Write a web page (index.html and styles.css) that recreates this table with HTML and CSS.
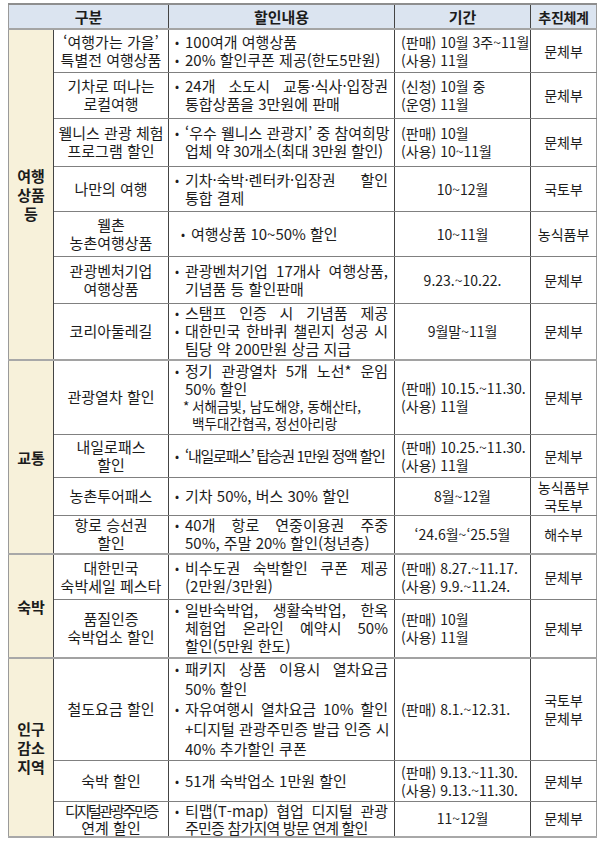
FILE: index.html
```html
<!DOCTYPE html>
<html lang="ko">
<head>
<meta charset="utf-8">
<title>할인 지원 내용</title>
<link rel="stylesheet" href="styles.css">
</head>
<body>
<table class="tbl">
  <colgroup>
    <col class="c-cat"><col class="c-name"><col class="c-desc"><col class="c-per"><col class="c-org">
  </colgroup>
  <thead>
    <tr><th colspan="2" class="h-first">구분</th><th>할인내용</th><th>기간</th><th class="h-org">추진체계</th></tr>
  </thead>
  <tbody>
    <tr class="sec">
      <td class="cat" rowspan="7">여행<br>상품<br>등</td>
      <td class="name">‘여행가는 가을’<br>특별전 여행상품</td>
      <td class="desc">
        <div class="item"><span class="bul">•</span><div class="txt"><span class="ln">100여개 여행상품</span></div></div>
        <div class="item"><span class="bul">•</span><div class="txt"><span class="ln">20% 할인쿠폰 제공(한도5만원)</span></div></div>
      </td>
      <td class="per">(판매) 10월 3주~11월<br>(사용) 11월</td>
      <td class="org">문체부</td>
    </tr>
    <tr>
      <td class="name">기차로 떠나는<br>로컬여행</td>
      <td class="desc">
        <div class="item"><span class="bul">•</span><div class="txt"><span class="ln j">24개 소도시 교통·식사·입장권</span><span class="ln">통합상품을 3만원에 판매</span></div></div>
      </td>
      <td class="per">(신청) 10월 중<br>(운영) 11월</td>
      <td class="org">문체부</td>
    </tr>
    <tr>
      <td class="name">웰니스 관광 체험<br>프로그램 할인</td>
      <td class="desc">
        <div class="item"><span class="bul">•</span><div class="txt"><span class="ln j">‘우수 웰니스 관광지’ 중 참여희망</span><span class="ln tight1">업체 약 30개소(최대 3만원 할인)</span></div></div>
      </td>
      <td class="per">(판매) 10월<br>(사용) 10~11월</td>
      <td class="org">문체부</td>
    </tr>
    <tr>
      <td class="name">나만의 여행</td>
      <td class="desc">
        <div class="item"><span class="bul">•</span><div class="txt"><span class="ln j">기차·숙박·렌터카·입장권 할인</span><span class="ln">통합 결제</span></div></div>
      </td>
      <td class="per c">10~12월</td>
      <td class="org">국토부</td>
    </tr>
    <tr>
      <td class="name">웰촌<br>농촌여행상품</td>
      <td class="desc ind">
        <div class="item"><span class="bul">•</span><div class="txt"><span class="ln">여행상품 10~50% 할인</span></div></div>
      </td>
      <td class="per c">10~11월</td>
      <td class="org">농식품부</td>
    </tr>
    <tr>
      <td class="name">관광벤처기업<br>여행상품</td>
      <td class="desc">
        <div class="item"><span class="bul">•</span><div class="txt"><span class="ln j">관광벤처기업 17개사 여행상품,</span><span class="ln">기념품 등 할인판매</span></div></div>
      </td>
      <td class="per c">9.23.~10.22.</td>
      <td class="org">문체부</td>
    </tr>
    <tr>
      <td class="name">코리아둘레길</td>
      <td class="desc">
        <div class="item"><span class="bul">•</span><div class="txt"><span class="ln j">스탬프 인증 시 기념품 제공</span></div></div>
        <div class="item"><span class="bul">•</span><div class="txt"><span class="ln j">대한민국 한바퀴 챌린지 성공 시</span><span class="ln">팀당 약 200만원 상금 지급</span></div></div>
      </td>
      <td class="per c">9월말~11월</td>
      <td class="org">문체부</td>
    </tr>

    <tr class="sec">
      <td class="cat" rowspan="4">교통</td>
      <td class="name">관광열차 할인</td>
      <td class="desc">
        <div class="item"><span class="bul">•</span><div class="txt"><span class="ln j">정기 관광열차 5개 노선* 운임</span><span class="ln">50% 할인</span></div></div>
        <div class="note"><span class="star">*</span><div class="txt"><span class="ln">서해금빛, 남도해양, 동해산타,</span><span class="ln">백두대간협곡, 정선아리랑</span></div></div>
      </td>
      <td class="per">(판매) 10.15.~11.30.<br>(사용) 11월</td>
      <td class="org">문체부</td>
    </tr>
    <tr>
      <td class="name">내일로패스<br>할인</td>
      <td class="desc">
        <div class="item"><span class="bul">•</span><div class="txt"><span class="ln squeeze">‘내일로패스’ 탑승권 1만원 정액 할인</span></div></div>
      </td>
      <td class="per">(판매) 10.25.~11.30.<br>(사용) 11월</td>
      <td class="org">문체부</td>
    </tr>
    <tr>
      <td class="name">농촌투어패스</td>
      <td class="desc">
        <div class="item"><span class="bul">•</span><div class="txt"><span class="ln">기차 50%, 버스 30% 할인</span></div></div>
      </td>
      <td class="per c">8월~12월</td>
      <td class="org">농식품부<br>국토부</td>
    </tr>
    <tr>
      <td class="name">항로 승선권<br>할인</td>
      <td class="desc">
        <div class="item"><span class="bul">•</span><div class="txt"><span class="ln j">40개 항로 연중이용권 주중</span><span class="ln">50%, 주말 20% 할인(청년층)</span></div></div>
      </td>
      <td class="per c">‘24.6월~‘25.5월</td>
      <td class="org">해수부</td>
    </tr>

    <tr class="sec">
      <td class="cat" rowspan="2">숙박</td>
      <td class="name">대한민국<br>숙박세일 페스타</td>
      <td class="desc">
        <div class="item"><span class="bul">•</span><div class="txt"><span class="ln j">비수도권 숙박할인 쿠폰 제공</span><span class="ln">(2만원/3만원)</span></div></div>
      </td>
      <td class="per">(판매) 8.27.~11.17.<br>(사용) 9.9.~11.24.</td>
      <td class="org">문체부</td>
    </tr>
    <tr>
      <td class="name">품질인증<br>숙박업소 할인</td>
      <td class="desc">
        <div class="item"><span class="bul">•</span><div class="txt"><span class="ln j">일반숙박업, 생활숙박업, 한옥</span><span class="ln j">체험업 온라인 예약시 50%</span><span class="ln">할인(5만원 한도)</span></div></div>
      </td>
      <td class="per">(판매) 10월<br>(사용) 11월</td>
      <td class="org">문체부</td>
    </tr>

    <tr class="sec">
      <td class="cat" rowspan="3">인구<br>감소<br>지역</td>
      <td class="name">철도요금 할인</td>
      <td class="desc tall">
        <div class="item"><span class="bul">•</span><div class="txt"><span class="ln j">패키지 상품 이용시 열차요금</span><span class="ln">50% 할인</span></div></div>
        <div class="item"><span class="bul">•</span><div class="txt"><span class="ln j">자유여행시 열차요금 10% 할인</span><span class="ln j">+디지털 관광주민증 발급 인증 시</span><span class="ln">40% 추가할인 쿠폰</span></div></div>
      </td>
      <td class="per">(판매) 8.1.~12.31.</td>
      <td class="org">국토부<br>문체부</td>
    </tr>
    <tr>
      <td class="name">숙박 할인</td>
      <td class="desc">
        <div class="item"><span class="bul">•</span><div class="txt"><span class="ln">51개 숙박업소 1만원 할인</span></div></div>
      </td>
      <td class="per">(판매) 9.13.~11.30.<br>(사용) 9.13.~11.30.</td>
      <td class="org">문체부</td>
    </tr>
    <tr class="last">
      <td class="name"><span class="narrow">디지털관광주민증</span><br>연계 할인</td>
      <td class="desc">
        <div class="item"><span class="bul">•</span><div class="txt"><span class="ln j">티맵(T-map) 협업 디지털 관광</span><span class="ln tight2">주민증 참가지역 방문 연계 할인</span></div></div>
      </td>
      <td class="per c">11~12월</td>
      <td class="org">문체부</td>
    </tr>
  </tbody>
</table>
</body>
</html>
```

FILE: styles.css
```css
html, body {
  margin: 0;
  padding: 0;
  background: #ffffff;
}

body {
  font-family: "Noto Sans CJK KR", "Noto Sans", sans-serif;
  color: #1c1c1c;
}

.tbl {
  margin: 3px 0 0 8px;
  width: 588px;
  table-layout: fixed;
  border-collapse: collapse;
  font-size: 15px;
  line-height: 18px;
}

.c-cat { width: 45px; }
.c-name { width: 115px; }
.c-desc { width: 226px; }
.c-per { width: 136px; }
.c-org { width: 66px; }

.tbl th {
  background: #dbe4f0;
  font-weight: 700;
  height: 23px;
  padding: 0;
  text-align: center;
  vertical-align: middle;
  border-top: 2px solid #8e8e8e;
  border-bottom: 2px solid #a4a4a4;
  border-left: 1px solid #444;
  border-right: 1px solid #444;
}

.tbl th.h-first { border-left-color: #9a9a9a; }
.tbl th.h-org { border-right-color: #9a9a9a; font-size: 14px; letter-spacing: -0.3px; }

.tbl td {
  padding: 0;
  vertical-align: middle;
  border: 1px solid #444;
  border-top-color: #808080;
  border-bottom-color: #808080;
}

.tbl tr.sec td { border-top: 2px solid #a2a2a2; }
.tbl tr.last td { border-bottom: 2px solid #a8a8a8; line-height: 17px; }

.tbl td.cat {
  background: #f7f1da;
  font-weight: 700;
  text-align: center;
  border-left-color: #9a9a9a;
  border-bottom: 2px solid #a8a8a8;
  line-height: 19px;
}

.tbl td.name {
  text-align: center;
  padding: 0 2px;
  white-space: nowrap;
}

.tbl td.desc {
  padding: 0 6px 0 6px;
}

.tbl td.desc.ind { padding-left: 12px; }

.tbl td.per {
  font-size: 14px;
  padding: 0 4px 0 6px;
  white-space: nowrap;
}

.tbl td.per.c { text-align: center; padding: 0; }

.tbl td.org {
  font-size: 14px;
  text-align: center;
  border-right-color: #9a9a9a;
  white-space: nowrap;
}

.item, .note {
  display: flex;
}

.bul {
  flex: none;
  width: 10px;
  font-size: 12px;
}

.txt {
  flex: 1;
  min-width: 0;
}

.ln {
  display: block;
  white-space: nowrap;
}

.ln.j {
  text-align: justify;
  text-align-last: justify;
}

.note {
  font-size: 13.6px;
  line-height: 17px;
  padding-left: 8px;
}

.star {
  flex: none;
  width: 9px;
}

.tall .item { line-height: 20px; }

.squeeze { letter-spacing: -1.3px; }
.tight1 { letter-spacing: -0.3px; }
.tight2 { letter-spacing: -0.8px; }
.narrow { letter-spacing: -2.3px; }

tbody tr:nth-child(1) { height: 43px; }
tbody tr:nth-child(2) { height: 46px; }
tbody tr:nth-child(3) { height: 48px; }
tbody tr:nth-child(4) { height: 45px; }
tbody tr:nth-child(5) { height: 45px; }
tbody tr:nth-child(6) { height: 47px; }
tbody tr:nth-child(7) { height: 57px; }
tbody tr:nth-child(8) { height: 74px; }
tbody tr:nth-child(9) { height: 43px; }
tbody tr:nth-child(10) { height: 38px; }
tbody tr:nth-child(11) { height: 39px; }
tbody tr:nth-child(12) { height: 45px; }
tbody tr:nth-child(13) { height: 59px; }
tbody tr:nth-child(14) { height: 102px; }
tbody tr:nth-child(15) { height: 41px; }
tbody tr:nth-child(16) { height: 34px; }
```
